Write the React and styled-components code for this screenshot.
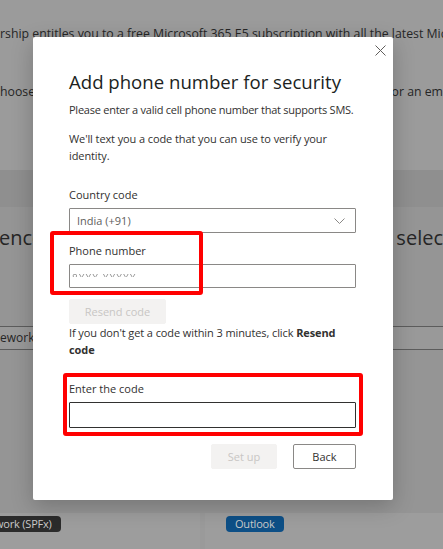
import React from 'react';
import styled, { createGlobalStyle } from 'styled-components';

const textColor = '#323130';
const annotRed = '#ff0000';

const GlobalStyle = createGlobalStyle`
  body {
    margin: 0;
    font-family: 'Open Sans', 'Noto Sans', sans-serif;
  }
`;

const Page = styled.div`
  position: relative;
  width: 443px;
  height: 549px;
  overflow: hidden;
  background: #999999;
  color: #262626;
`;

const Intro = styled.div`
  height: 170px;
  background: #9b9b9b;
  font-size: 12.3px;
  white-space: nowrap;
  overflow: hidden;
`;

const IntroLine = styled.div`
  display: flex;
  justify-content: space-between;
  height: 20px;
  line-height: 20px;
  margin-top: ${p => p.$top}px;
`;

const Band = styled.div`
  height: 37px;
  background: #8f8f8f;
`;

const Heading = styled.div`
  display: flex;
  justify-content: space-between;
  height: 119px;
  padding-top: 18px;
  box-sizing: border-box;
  font-size: 20px;
  line-height: 26px;
  white-space: nowrap;
  background: #959595;
`;

const TableRow = styled.div`
  height: 24px;
  border-top: 1px solid #5c5c5c;
  border-bottom: 1px solid #5c5c5c;
  font-size: 12px;
  line-height: 22px;
  box-sizing: border-box;
  background: #999999;
`;

const Filler = styled.div`
  height: 163px;
  background: #959595;
`;

const Cards = styled.div`
  display: grid;
  grid-template-columns: 200px 1fr;
  gap: 5px;
  height: 36px;
  background: #9a9a9a;
`;

const Card = styled.div`
  display: flex;
  align-items: flex-start;
  background: #9d9d9d;
  padding: 3px 0 0 ${p => p.$pad}px;
`;

const Pill = styled.span`
  display: block;
  height: 16px;
  line-height: 16px;
  padding: 0 9px;
  border-radius: 4px;
  font-size: 11px;
  letter-spacing: -0.2px;
  color: #c9c9c9;
  background: ${p => p.$bg};
`;

const Modal = styled.div`
  position: absolute;
  left: 33px;
  top: 37px;
  width: 360px;
  height: 463px;
  box-sizing: border-box;
  padding: 32px 37px 0 36px;
  background: #ffffff;
  border-radius: 2px;
  box-shadow: 0 6px 22px rgba(0, 0, 0, 0.22);
  color: ${textColor};
`;

const CloseButton = styled.button`
  position: absolute;
  right: 5px;
  top: 5px;
  width: 16px;
  height: 16px;
  padding: 0;
  border: none;
  background: transparent;
  display: flex;
  align-items: center;
  justify-content: center;
`;

const Title = styled.h1`
  margin: 0;
  font-size: 18.6px;
  line-height: 26px;
  font-weight: 400;
  color: #201f1e;
`;

const Text = styled.p`
  margin: ${p => p.$top}px 0 0;
  font-size: 11px;
  line-height: 17px;
  letter-spacing: ${p => (p.$tight ? '-0.25px' : '-0.1px')};
  white-space: ${p => (p.$tight ? 'nowrap' : 'normal')};
`;

const Strong = styled.strong`
  font-weight: 700;
`;

const Field = styled.div`
  display: flex;
  flex-direction: column;
  gap: 5px;
  margin-top: ${p => p.$top}px;
`;

const Label = styled.label`
  font-size: 11px;
  line-height: 17px;
`;

const Box = styled.div`
  display: flex;
  align-items: center;
  justify-content: space-between;
  height: ${p => p.$h}px;
  box-sizing: border-box;
  padding: 0 10px 0 7px;
  border: 1px solid ${p => (p.$dark ? '#323130' : '#8a8886')};
  border-radius: 1px;
  font-size: 11px;
  color: #605e5c;
`;

const Masked = styled.span`
  display: block;
  height: 4px;
  overflow: hidden;
  margin: -3px 0 0 -5px;
  font-size: 10px;
  line-height: 10px;
  letter-spacing: 1px;
  color: #8f8f8f;
  filter: blur(0.3px);
`;

const Button = styled.button`
  height: 25px;
  width: ${p => p.$w}px;
  padding: 0;
  box-sizing: border-box;
  font-family: inherit;
  font-size: 11px;
  border-radius: 2px;
  border: 1px solid ${p => (p.$disabled ? '#f3f2f1' : '#8a8886')};
  background: ${p => (p.$disabled ? '#f3f2f1' : '#ffffff')};
  color: ${p => (p.$disabled ? '#c8c6c4' : textColor)};
`;

const Actions = styled.div`
  display: flex;
  justify-content: flex-end;
  gap: 16px;
  margin-top: 16px;
`;

const Highlight = styled.div`
  position: absolute;
  left: ${p => p.$x}px;
  top: ${p => p.$y}px;
  width: ${p => p.$w}px;
  height: ${p => p.$h}px;
  box-sizing: border-box;
  border: 4px solid ${annotRed};
  border-radius: 3px;
  pointer-events: none;
`;

export default function App() {
  return (
    <Page>
      <GlobalStyle />
      <Intro>
        <IntroLine $top={24}>
          <span>rship entitles you to a free Microsoft 365 E5 subscription with all the latest Micr</span>
        </IntroLine>
        <IntroLine $top={38}>
          <span>hoose</span>
          <span>or an em</span>
        </IntroLine>
      </Intro>
      <Band />
      <Heading>
        <span style={{ marginLeft: -1 }}>ence</span>
        <span>r selec</span>
      </Heading>
      <TableRow>ework (</TableRow>
      <Filler />
      <Cards>
        <Card $pad={0}><Pill $bg="#2b2b2b" style={{ marginLeft: -14 }}>work (SPFx)</Pill></Card>
        <Card $pad={21}><Pill $bg="#0d4f86">Outlook</Pill></Card>
      </Cards>

      <Modal>
        <CloseButton aria-label="Close">
          <svg width="11" height="11" viewBox="0 0 11 11">
            <path d="M0.5 0.5 L10.5 10.5 M10.5 0.5 L0.5 10.5" stroke="#605e5c" strokeWidth="1" />
          </svg>
        </CloseButton>
        <Title>Add phone number for security</Title>
        <Text $top={6} $tight>Please enter a valid cell phone number that supports SMS.</Text>
        <Text $top={12}>We'll text you a code that you can use to verify your identity.</Text>

        <Field $top={22}>
          <Label>Country code</Label>
          <Box $h={25}>
            <span>India (+91)</span>
            <svg width="11" height="6" viewBox="0 0 11 6">
              <path d="M0.5 0.5 L5.5 5.5 L10.5 0.5" fill="none" stroke="#8a8886" strokeWidth="1" />
            </svg>
          </Box>
        </Field>

        <Field $top={9}>
          <Label>Phone number</Label>
          <Box $h={24}>
            <Masked>8XXX XXXXX</Masked>
          </Box>
        </Field>

        <Button $w={97} $disabled style={{ marginTop: 11 }}>Resend code</Button>
        <Text $top={0}>If you don't get a code within 3 minutes, click <Strong>Resend code</Strong></Text>

        <Field $top={22}>
          <Label>Enter the code</Label>
          <Box $h={26} $dark />
        </Field>

        <Actions>
          <Button $w={66} $disabled>Set up</Button>
          <Button $w={63}>Back</Button>
        </Actions>

        <Highlight $x={17} $y={194} $w={153} $h={64} />
        <Highlight $x={30} $y={336} $w={300} $h={63} />
      </Modal>
    </Page>
  );
}
